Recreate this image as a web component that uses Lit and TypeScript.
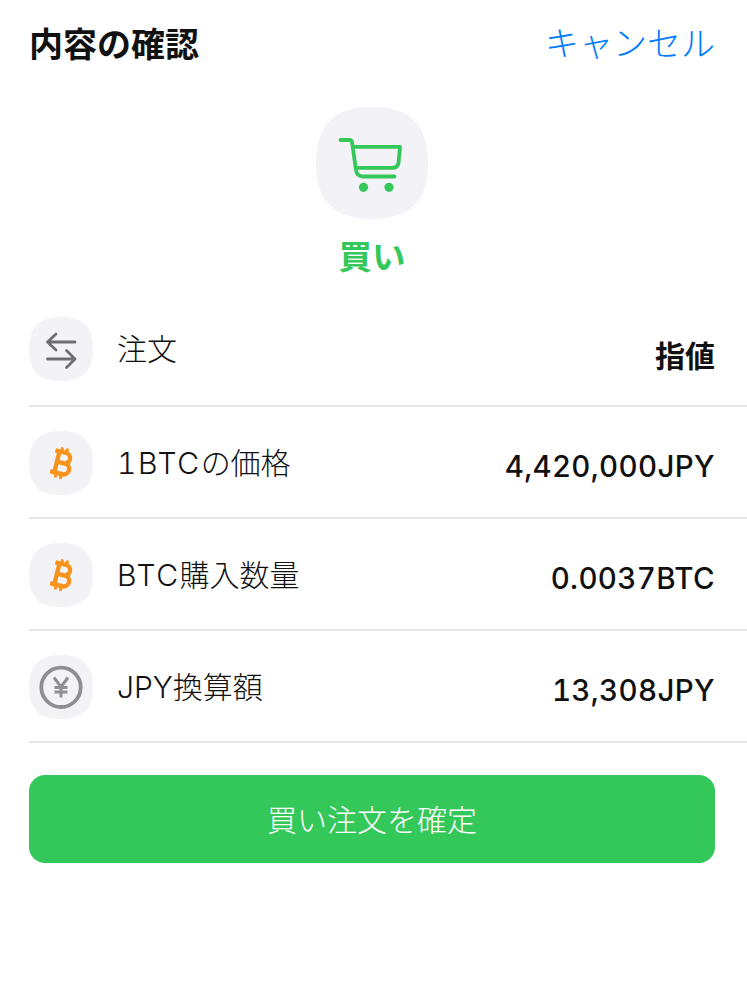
import { LitElement, html, css, svg } from 'lit';
import { customElement } from 'lit/decorators.js';

const btcIcon = svg`
  <g transform="rotate(14 32 32)" fill="none" stroke="#f7931a" stroke-width="4.4">
    <path d="M23.5 21H34.5a4.6 4.6 0 0 1 0 10.6H27.5M27.5 31.6H36a5.2 5.2 0 0 1 0 11H23.5" />
    <path d="M27.8 21V42.6" />
    <path d="M29.8 16.5V21M35 16.5V21M29.8 43V47.5M35 43V47.5" stroke-width="3" />
  </g>
`;

const swapIcon = svg`
  <g fill="none" stroke="#6e6e73" stroke-width="2.8" stroke-linecap="round" stroke-linejoin="round">
    <path d="M46 25H18.5M27 17L18.5 25L27 33" />
    <path d="M18.5 42H46M37.5 33.5L46 42L37.5 50.5" />
  </g>
`;

const yenIcon = svg`
  <circle cx="32" cy="32.3" r="19.7" fill="none" stroke="#8e8e93" stroke-width="3.8" />
  <g fill="none" stroke="#8e8e93" stroke-width="3">
    <path d="M25 22.5L32 32L39 22.5M32 32V42.5M25.5 32.5H38.5M25.5 37H38.5" />
  </g>
`;

const rows = [
  { icon: swapIcon, label: html`注文`, value: '指値', offset: true },
  { icon: btcIcon, label: html`<span class="btc">1BTC</span>の価格`, value: '4,420,000JPY' },
  { icon: btcIcon, label: html`<span class="btc">BTC</span>購入数量`, value: '0.0037BTC' },
  { icon: yenIcon, label: html`JPY換算額`, value: '13,308JPY' },
];

@customElement('app-root')
export class AppRoot extends LitElement {
  static styles = css`
    :host {
      display: block;
      height: 995px;
      background: #fff;
      color: #111;
      font-family: Inter, 'Noto Sans CJK JP', sans-serif;
    }
    .header {
      display: flex;
      justify-content: space-between;
      align-items: center;
      height: 84px;
      padding: 0 32px 0 29px;
    }
    .title {
      font-size: 34px;
      font-weight: 700;
    }
    .cancel {
      font-size: 34px;
      font-weight: 300;
      color: #007aff;
      margin-bottom: 2px;
    }
    .hero {
      display: flex;
      flex-direction: column;
      align-items: center;
      margin-top: 23px;
      padding-right: 3px;
    }
    .hero-icon {
      width: 112px;
      height: 112px;
      background: #f2f2f7;
      clip-path: path('M56 0C94 0 112 18 112 56C112 94 94 112 56 112C18 112 0 94 0 56C0 18 18 0 56 0Z');
    }
    .hero-icon svg {
      display: block;
    }
    .side {
      margin-top: 14px;
      font-size: 33.5px;
      line-height: 48px;
      font-weight: 700;
      color: #34c759;
    }
    .rows {
      margin-top: 36px;
      margin-left: 29px;
    }
    .row {
      display: flex;
      align-items: center;
      padding: 24px 32px 22px 0;
      border-bottom: 2px solid #e5e5ea;
    }
    .row.first {
      padding-top: 0;
      padding-bottom: 24px;
    }
    .row-icon {
      flex: none;
      width: 64px;
      height: 64px;
      background: #f2f2f7;
      clip-path: path('M32 0C54 0 64 10 64 32C64 54 54 64 32 64C10 64 0 54 0 32C0 10 10 0 32 0Z');
    }
    .row-icon svg {
      display: block;
    }
    .label {
      margin-left: 24px;
      flex: 1;
      font-size: 30px;
      font-weight: 300;
      line-height: 40px;
    }
    .btc {
      letter-spacing: 1.6px;
      font-feature-settings: 'tnum';
    }
    .value {
      font-size: 29.5px;
      line-height: 40px;
      font-weight: 550;
      letter-spacing: 0.35px;
      font-feature-settings: 'tnum';
      margin-top: 5px;
    }
    .value.offset {
      margin-top: 14px;
      font-size: 30px;
      font-weight: 600;
      letter-spacing: 0;
    }
    .confirm {
      display: block;
      box-sizing: border-box;
      width: 686px;
      height: 88px;
      margin: 32px 0 0 29px;
      padding: 0 0 2px;
      border: 0;
      border-radius: 16px;
      background: #34c759;
      color: #fff;
      font: inherit;
      font-size: 30px;
      font-weight: 300;
    }
  `;

  render() {
    return html`
      <div class="header">
        <div class="title">内容の確認</div>
        <div class="cancel">キャンセル</div>
      </div>
      <div class="hero">
        <div class="hero-icon">
          <svg width="112" height="112" viewBox="0 0 112 112" fill="none">
            <path
              d="M24.5 33H33.5Q35.6 33 36 35L40 63Q41 69.5 47 69.5H78.5M37 39.8H84L82.5 56Q81.5 60.8 76.5 60.8H42"
              stroke="#34c759"
              stroke-width="3.8"
              stroke-linecap="round"
              stroke-linejoin="round"
            />
            <circle cx="47.5" cy="80.3" r="4.6" fill="#34c759" />
            <circle cx="73" cy="80.3" r="4.6" fill="#34c759" />
          </svg>
        </div>
        <div class="side">買い</div>
      </div>
      <div class="rows">
        ${rows.map(
          (r, i) => html`
            <div class="row ${i === 0 ? 'first' : ''}">
              <div class="row-icon">
                <svg width="64" height="64" viewBox="0 0 64 64">${r.icon}</svg>
              </div>
              <div class="label">${r.label}</div>
              <div class="value ${r.offset ? 'offset' : ''}">${r.value}</div>
            </div>
          `
        )}
      </div>
      <button class="confirm">買い注文を確定</button>
    `;
  }
}
